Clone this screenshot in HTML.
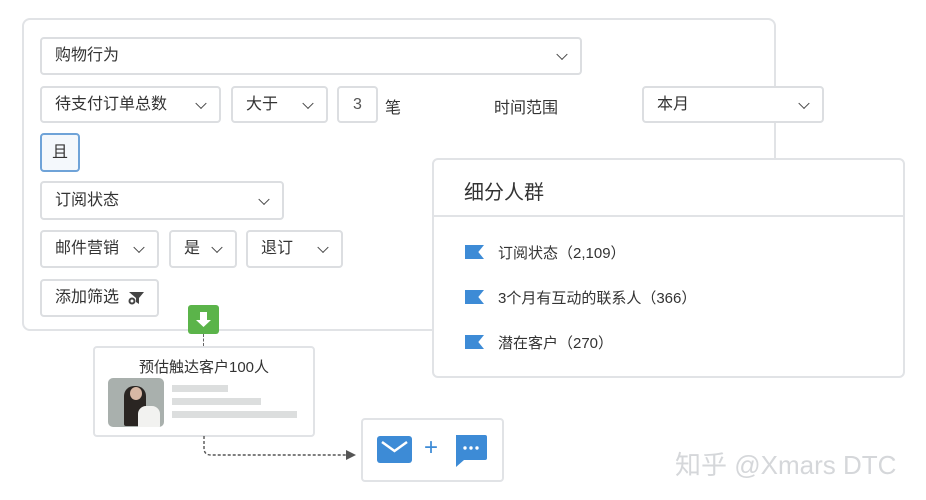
<!DOCTYPE html>
<html><head><meta charset="utf-8"><style>
body{margin:0;width:926px;height:500px;background:#fff;position:relative;overflow:hidden;font-family:"Liberation Sans","Noto Sans CJK SC",sans-serif;color:#333}
.a{position:absolute;box-sizing:border-box}
.s{border:2px solid #dcdee1;border-radius:4px;background:#fff;font-size:16px;padding-left:13px;display:flex;align-items:center;line-height:1}
.s .c{position:absolute;right:14px;top:50%;width:7px;height:7px;border-right:1.6px solid #444;border-bottom:1.6px solid #444;transform:translateY(-70%) rotate(45deg)}
.t{font-size:16px;color:#333}
.flag{position:absolute;width:19px;height:14px;background:#3d8bd6;clip-path:polygon(0 0,100% 0,70% 50%,100% 100%,0 100%)}
.li{position:absolute;left:498px;font-size:15px;color:#333}
</style></head><body>
<div class="a" style="left:22px;top:18px;width:754px;height:313px;border:2px solid #e1e3e6;border-radius:8px"></div>
<div class="a s" style="left:40px;top:37px;width:542px;height:38px">购物行为<i class="c"></i></div>
<div class="a s" style="left:40px;top:86px;width:181px;height:37px">待支付订单总数<i class="c"></i></div>
<div class="a s" style="left:231px;top:86px;width:97px;height:37px">大于<i class="c"></i></div>
<div class="a s" style="left:337px;top:86px;width:41px;height:37px;justify-content:center;padding:0;color:#555">3</div>
<div class="a t" style="left:385px;top:94px">笔</div>
<div class="a t" style="left:494px;top:94px">时间范围</div>
<div class="a s" style="left:642px;top:86px;width:182px;height:37px">本月<i class="c"></i></div>
<div class="a s" style="left:40px;top:133px;width:40px;height:39px;border-color:#6fa3d8;background:#f4f8fc;justify-content:center;padding:0">且</div>
<div class="a s" style="left:40px;top:181px;width:244px;height:39px">订阅状态<i class="c"></i></div>
<div class="a s" style="left:40px;top:230px;width:119px;height:38px">邮件营销<i class="c"></i></div>
<div class="a s" style="left:169px;top:230px;width:68px;height:38px">是<i class="c"></i></div>
<div class="a s" style="left:246px;top:230px;width:97px;height:38px">退订<i class="c"></i></div>
<div class="a s" style="left:40px;top:279px;width:119px;height:38px">添加筛选
<svg width="18" height="14" style="margin-left:8px"><path d="M2 1h15l-5 6v6l-3-2v-4z" fill="#444"/><circle cx="5" cy="10" r="3.5" fill="#444"/><circle cx="5" cy="10" r="1.5" fill="#fff"/></svg></div>
<div class="a" style="left:188px;top:305px;width:31px;height:29px;background:#5bb44a;border-radius:3px">
<svg width="31" height="29"><path d="M12 7h7v8h4l-7.5 7-7.5-7h4z" fill="#fff"/></svg></div>
<div class="a" style="left:203px;top:334px;height:12px;border-left:1.5px dashed #666"></div>
<div class="a" style="left:93px;top:346px;width:222px;height:91px;border:2px solid #e1e3e6;border-radius:4px;background:#fff"></div>
<div class="a" style="left:93px;top:356px;width:222px;text-align:center;font-size:15px">预估触达客户100人</div>
<div class="a" style="left:108px;top:378px;width:56px;height:49px;border-radius:5px;background:#a9b0ad;overflow:hidden">
<div class="a" style="left:16px;top:8px;width:22px;height:40px;background:#2a2522;border-radius:10px 10px 2px 2px"></div>
<div class="a" style="left:30px;top:28px;width:22px;height:25px;background:#f2f2f0;border-radius:8px 8px 0 0"></div>
<div class="a" style="left:22px;top:9px;width:12px;height:13px;background:#d8b8a5;border-radius:50%"></div></div>
<div class="a" style="left:172px;top:385px;width:56px;height:7px;background:#dcdede"></div>
<div class="a" style="left:172px;top:398px;width:89px;height:7px;background:#dcdede"></div>
<div class="a" style="left:172px;top:411px;width:125px;height:7px;background:#dcdede"></div>
<svg class="a" style="left:200px;top:436px" width="160" height="30"><path d="M4 0v12q0 7 7 7h137" stroke="#555" stroke-width="1.4" stroke-dasharray="3 2" fill="none"/><path d="M146 14l10 5-10 5z" fill="#555"/></svg>
<div class="a" style="left:361px;top:418px;width:143px;height:64px;border:2px solid #e1e3e6;border-radius:4px;background:#fff"></div>
<svg class="a" style="left:377px;top:433px" width="36" height="32"><rect x="0" y="3" width="35" height="27" rx="3" fill="#3d8bd6"/><path d="M5 9l12.5 9 12.5-9" stroke="#fff" stroke-width="2.5" fill="none"/></svg>
<div class="a" style="left:424px;top:434px;font-size:24px;color:#3d8bd6">+</div>
<svg class="a" style="left:453px;top:433px" width="35" height="34"><path d="M3 2h29a2 2 0 0 1 2 2v21a2 2 0 0 1-2 2H11l-8 7z" fill="#3d8bd6"/><circle cx="12" cy="15" r="1.7" fill="#fff"/><circle cx="18" cy="15" r="1.7" fill="#fff"/><circle cx="24" cy="15" r="1.7" fill="#fff"/></svg>
<div class="a" style="left:432px;top:158px;width:473px;height:220px;border:2px solid #e1e3e6;border-radius:6px;background:#fff"></div>
<div class="a" style="left:434px;top:215px;width:469px;border-top:2px solid #e1e3e6"></div>
<div class="a" style="left:464px;top:176px;font-size:20px;color:#333">细分人群</div>
<div class="flag" style="left:465px;top:245px"></div><div class="li" style="top:242px">订阅状态（2,109）</div>
<div class="flag" style="left:465px;top:290px"></div><div class="li" style="top:287px">3个月有互动的联系人（366）</div>
<div class="flag" style="left:465px;top:335px"></div><div class="li" style="top:332px">潜在客户（270）</div>
<div class="a" style="left:675px;top:445px;font-size:26px;color:#d5d7da;white-space:nowrap">知乎 @Xmars DTC</div>
</body></html>
